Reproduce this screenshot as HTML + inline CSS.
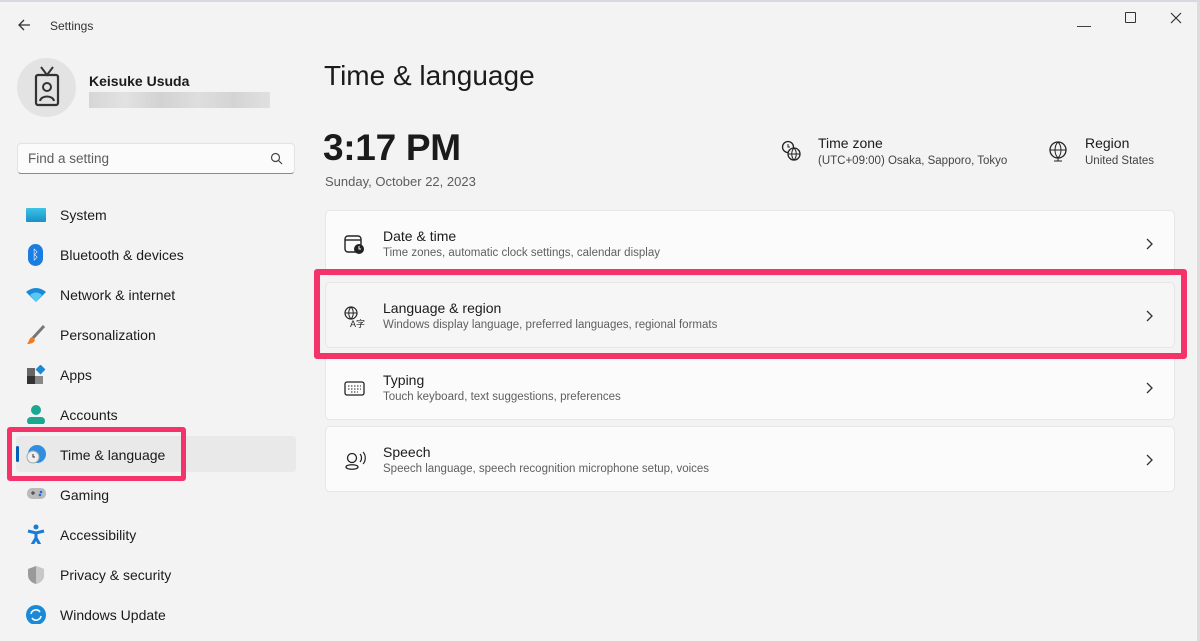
<!DOCTYPE html>
<html><head><meta charset="utf-8"><style>
*{margin:0;padding:0;box-sizing:border-box}
body{width:1200px;height:641px;background:#f3f3f3;font-family:"Liberation Sans",sans-serif;color:#1b1b1b;position:relative;overflow:hidden}
.a{position:absolute}
.nav{position:absolute;left:60px;font-size:14px;color:#1b1b1b}
.ic{position:absolute;left:26px;width:20px;height:20px}
.card{position:absolute;left:325px;width:850px;height:66px;background:#fbfbfb;border:1px solid #e6e6e6;border-radius:5px}
.card .t{position:absolute;left:57px;top:17px;font-size:14px}
.card .s{position:absolute;left:57px;top:36px;font-size:11.5px;color:#5f5f5f}
.card .ch{position:absolute;right:18px;top:26px}
.card svg.i{position:absolute;left:18px;top:23px}
</style></head><body>
<div class="a" style="left:1197px;top:0;width:3px;height:641px;background:#dcdcdc"></div>
<div class="a" style="left:0;top:0;width:1200px;height:2px;background:#d8d8e0"></div>
<svg class="a" style="left:16px;top:17px" width="16" height="16"><path d="M14 8H3M8 3L3 8l5 5" stroke="#333" stroke-width="1.3" fill="none"/></svg>
<div class="a" style="left:50px;top:19px;font-size:12px;color:#333">Settings</div>
<div class="a" style="left:1077px;top:17px;font-size:14px;color:#333">—</div>
<div class="a" style="left:1125px;top:12px;width:11px;height:11px;border:1.2px solid #333;border-radius:1px"></div>
<svg class="a" style="left:1170px;top:12px" width="12" height="12"><path d="M1 1L11 11M11 1L1 11" stroke="#333" stroke-width="1.2"/></svg>
<div class="a" style="left:17px;top:58px;width:59px;height:59px;border-radius:50%;background:#e3e3e3"></div>
<svg class="a" style="left:32px;top:66px" width="30" height="44"><path d="M9 1l6 8 6-8" stroke="#333" stroke-width="2" fill="none"/><rect x="4" y="9" width="22" height="30" rx="2" stroke="#333" stroke-width="2.2" fill="none"/><circle cx="15" cy="21" r="4" stroke="#333" stroke-width="2" fill="none"/><path d="M8 35c1-6 13-6 14 0" stroke="#333" stroke-width="2" fill="none"/></svg>
<div class="a" style="left:89px;top:73px;font-size:14px;font-weight:bold">Keisuke Usuda</div>
<div class="a" style="left:89px;top:92px;width:181px;height:16px;background:linear-gradient(90deg,#d6d6d6,#e2e2e2,#d2d2d2,#dedede,#d4d4d4,#e0e0e0);"></div>
<div class="a" style="left:17px;top:143px;width:278px;height:31px;background:#fbfbfb;border:1px solid #e2e2e2;border-bottom-color:#8a8a8a;border-radius:4px"></div>
<div class="a" style="left:28px;top:151px;font-size:13.5px;color:#5d5d5d">Find a setting</div>
<svg class="a" style="left:270px;top:152px" width="13" height="13"><circle cx="5.5" cy="5.5" r="4" stroke="#444" stroke-width="1.2" fill="none"/><path d="M8.5 8.5l3.5 3.5" stroke="#444" stroke-width="1.2"/></svg>
<div class="a" style="left:16px;top:436px;width:280px;height:36px;background:#e9e9e9;border-radius:4px"></div>
<div class="a" style="left:16px;top:446px;width:3px;height:16px;background:#005fb8;border-radius:2px"></div>
<div class="a" style="left:7px;top:427px;width:179px;height:54px;border:5px solid #f5336b;border-radius:3px"></div>
<div class="ic" style="top:208px;height:14px;background:linear-gradient(#3cc4e6,#1a8fc7);border-radius:1px"></div>
<div class="ic" style="top:244px;left:28px;width:15px;height:22px;background:#1b7de0;border-radius:8px;color:#fff;font-size:13px;text-align:center;line-height:22px">ᛒ</div>
<svg class="ic" style="top:286px" width="20" height="20"><path d="M0 6Q10-2 20 6L10 16Z" fill="#1a8ad8"/><path d="M4 9Q10 4 16 9L10 16Z" fill="#5ac8f5"/></svg>
<svg class="ic" style="top:325px" width="20" height="20"><path d="M18 1L7 13" stroke="#777" stroke-width="3"/><path d="M6 12c-3 1-3 5-5 7 4 0 7-1 8-4z" fill="#f07a22"/></svg>
<svg class="ic" style="top:365px" width="20" height="20"><rect x="1" y="3" width="8" height="8" fill="#666"/><rect x="1" y="11" width="8" height="8" fill="#333"/><rect x="9" y="11" width="8" height="8" fill="#888"/><rect x="11" y="1" width="7" height="7" fill="#1a8ad8" transform="rotate(45 14.5 4.5)"/></svg>
<svg class="ic" style="top:404px" width="20" height="22"><circle cx="10" cy="6" r="5" fill="#1aa890"/><rect x="1" y="13" width="18" height="8" rx="4" fill="#1aa890"/></svg>
<svg class="ic" style="top:444px" width="20" height="20"><circle cx="11" cy="10" r="9" fill="#2f8ee0"/><circle cx="7" cy="13" r="6" fill="#eee" stroke="#aaa"/><path d="M7 10v3h2" stroke="#333" fill="none"/></svg>
<svg class="ic" style="top:485px" width="22" height="18"><rect x="1" y="3" width="19" height="11" rx="5" fill="#bbb"/><path d="M5 8h4M7 6v4" stroke="#333"/><circle cx="15" cy="7" r="1.3" fill="#1a6ad8"/><circle cx="14" cy="10" r="1.3" fill="#1a6ad8"/></svg>
<svg class="ic" style="top:524px" width="20" height="22"><circle cx="10" cy="3" r="2.5" fill="#1a7ad8"/><path d="M2 7l8 2 8-2M10 9v5l-4 7M10 14l4 7" stroke="#1a7ad8" stroke-width="3" fill="none"/></svg>
<svg class="ic" style="top:565px" width="20" height="20"><path d="M10 1L2 4v6c0 5 4 8 8 9 4-1 8-4 8-9V4z" fill="#9a9a9a"/><path d="M10 1v18c4-1 8-4 8-9V4z" fill="#c8c8c8"/></svg>
<svg class="ic" style="top:604px" width="22" height="22"><circle cx="10" cy="11" r="10" fill="#1a8ad8"/><path d="M5 10a5 5 0 019-2M15 12a5 5 0 01-9 2" stroke="#fff" stroke-width="1.6" fill="none"/></svg>
<div class="nav" style="top:207px">System</div>
<div class="nav" style="top:247px">Bluetooth &amp; devices</div>
<div class="nav" style="top:287px">Network &amp; internet</div>
<div class="nav" style="top:327px">Personalization</div>
<div class="nav" style="top:367px">Apps</div>
<div class="nav" style="top:407px">Accounts</div>
<div class="nav" style="top:447px">Time &amp; language</div>
<div class="nav" style="top:487px">Gaming</div>
<div class="nav" style="top:527px">Accessibility</div>
<div class="nav" style="top:567px">Privacy &amp; security</div>
<div class="nav" style="top:607px">Windows Update</div>
<div class="a" style="left:324px;top:60px;font-size:28px">Time &amp; language</div>
<div class="a" style="left:323px;top:127px;font-size:37px;font-weight:bold;color:#1b1b1b;letter-spacing:-0.3px">3:17 PM</div>
<div class="a" style="left:325px;top:174px;font-size:13px;color:#5d5d5d">Sunday, October 22, 2023</div>
<svg class="a" style="left:781px;top:140px" width="22" height="22"><circle cx="7" cy="7" r="5.5" stroke="#222" stroke-width="1.3" fill="none"/><path d="M7 4v3h2" stroke="#222" fill="none"/><circle cx="13" cy="14" r="6" fill="#f3f3f3" stroke="#222" stroke-width="1.3"/><path d="M7 14h12M13 8c-3 3-3 9 0 12M13 8c3 3 3 9 0 12" stroke="#222" fill="none"/></svg>
<div class="a" style="left:818px;top:135px;font-size:14px">Time zone</div>
<div class="a" style="left:818px;top:155px;font-size:11.5px;color:#444">(UTC+09:00) Osaka, Sapporo, Tokyo</div>
<svg class="a" style="left:1048px;top:140px" width="20" height="22"><circle cx="10" cy="10" r="8" stroke="#222" stroke-width="1.3" fill="none"/><path d="M2 10h16M10 2c-4 4-4 12 0 16M10 2c4 4 4 12 0 16M10 18v3M6 21h8" stroke="#222" fill="none"/></svg>
<div class="a" style="left:1085px;top:135px;font-size:14px">Region</div>
<div class="a" style="left:1085px;top:155px;font-size:11.5px;color:#444">United States</div>
<div class="card" style="top:210px"><svg class="i" width="22" height="22"><rect x="1" y="2" width="16" height="16" rx="3" stroke="#222" stroke-width="1.4" fill="none"/><path d="M1 6h16" stroke="#222" stroke-width="1.4"/><circle cx="15" cy="15" r="5" fill="#222"/><path d="M15 12v3h2" stroke="#fff" fill="none"/></svg><div class="t">Date &amp; time</div><div class="s">Time zones, automatic clock settings, calendar display</div><svg class="ch" width="12" height="14"><path d="M3 2l5 5-5 5" stroke="#333" stroke-width="1.3" fill="none"/></svg></div>
<div class="card" style="top:282px;background:#f6f6f6"><svg class="i" width="22" height="22"><circle cx="7" cy="7" r="6" stroke="#222" stroke-width="1.2" fill="none"/><path d="M1 7h12M7 1c-3 3-3 9 0 12M7 1c3 3 3 9 0 12" stroke="#222" fill="none"/><text x="6" y="21" font-size="9" font-family="Liberation Sans" fill="#222">A字</text></svg><div class="t">Language &amp; region</div><div class="s">Windows display language, preferred languages, regional formats</div><svg class="ch" width="12" height="14"><path d="M3 2l5 5-5 5" stroke="#333" stroke-width="1.3" fill="none"/></svg></div>
<div class="card" style="top:354px"><svg class="i" width="22" height="22"><rect x="1" y="4" width="19" height="13" rx="2" stroke="#222" stroke-width="1.3" fill="none"/><path d="M4 8h13M4 11h13M7 14h7" stroke="#222" stroke-dasharray="1.5 1.5"/></svg><div class="t">Typing</div><div class="s">Touch keyboard, text suggestions, preferences</div><svg class="ch" width="12" height="14"><path d="M3 2l5 5-5 5" stroke="#333" stroke-width="1.3" fill="none"/></svg></div>
<div class="card" style="top:426px"><svg class="i" width="22" height="22"><circle cx="8" cy="8" r="4.5" stroke="#222" stroke-width="1.3" fill="none"/><path d="M2 17c0-3 12-3 12 0s-12 3-12 0" stroke="#222" stroke-width="1.3" fill="none"/><path d="M16 4c2 2 2 6 0 8M19 2c3 3 3 9 0 12" stroke="#222" stroke-width="1.2" fill="none"/></svg><div class="t">Speech</div><div class="s">Speech language, speech recognition microphone setup, voices</div><svg class="ch" width="12" height="14"><path d="M3 2l5 5-5 5" stroke="#333" stroke-width="1.3" fill="none"/></svg></div>
<div class="a" style="left:314px;top:269px;width:873px;height:90px;border:6px solid #f5336b;border-radius:3px"></div>
</body></html>
